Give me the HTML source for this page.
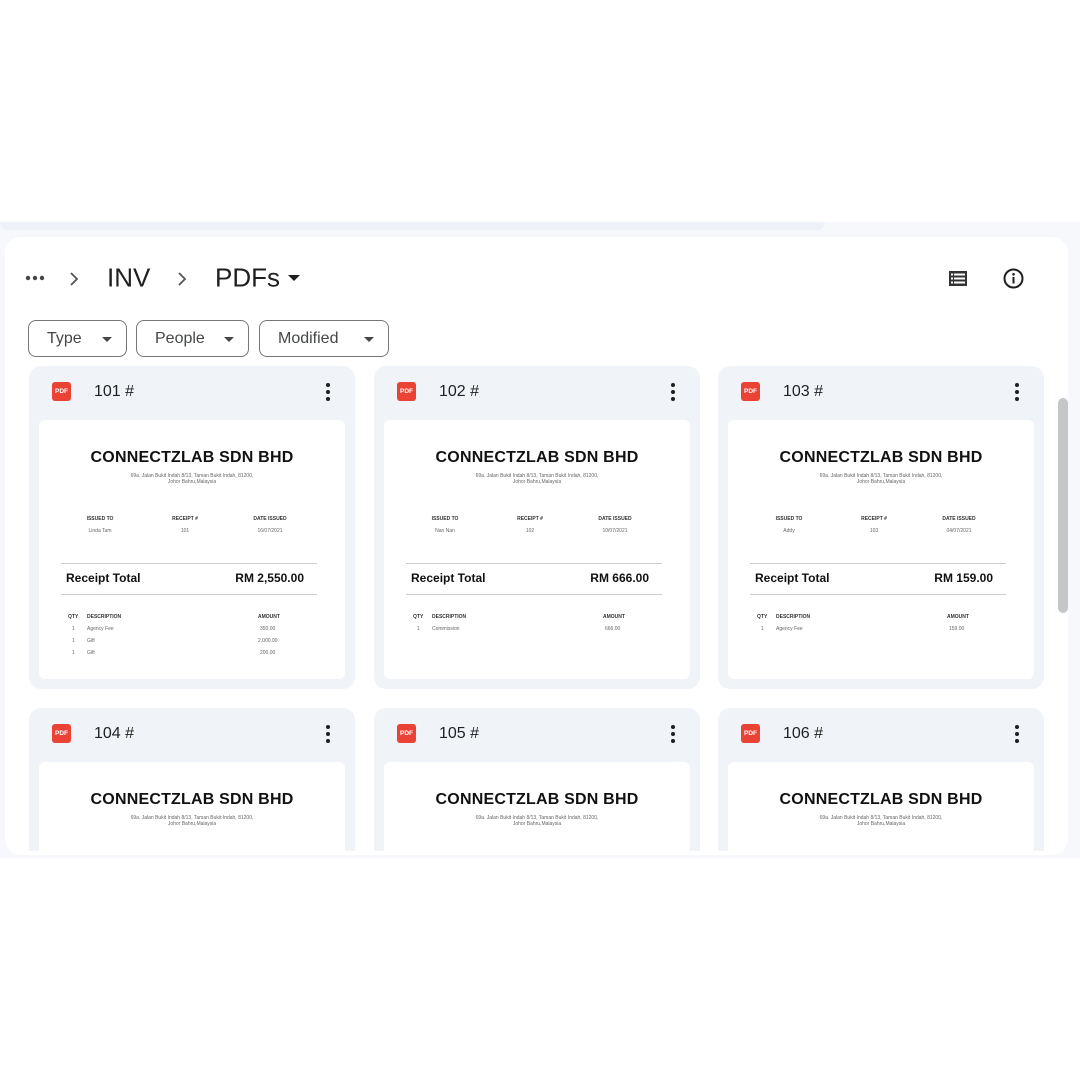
<!DOCTYPE html>
<html><head><style>
*{margin:0;padding:0;box-sizing:border-box}
body{width:1080px;height:1080px;background:#fff;position:relative;overflow:hidden;font-family:"Liberation Sans",Arial,sans-serif;color:#1f1f1f}
.bg{position:absolute;left:0;top:222px;width:1080px;height:636px;background:#f6f8fc}
.topbar{position:absolute;left:0;top:222px;width:825px;height:8px;background:#eef1f8;border-radius:0 0 8px 8px}
.panel{position:absolute;left:5px;top:237px;width:1063px;height:618px;background:#fff;border-radius:16px;overflow:hidden}
.crumb{position:absolute;top:278px;transform:translateY(-50%);font-size:26px;color:#1f1f1f}
.chip{position:absolute;top:320px;height:37px;border:1px solid #747775;border-radius:8px;font-size:16px;color:#444746;line-height:35px;padding-left:18px}
.chip:after{content:"";position:absolute;right:14px;top:16px;border-left:5px solid transparent;border-right:5px solid transparent;border-top:5px solid #444746}
.card{position:absolute;width:326px;background:#f0f4f9;border-radius:12px;overflow:hidden}
.pdf{position:absolute;left:23px;top:16px;width:19px;height:19px;background:#ea4335;border-radius:3px;color:#fff;font-size:6.5px;font-weight:bold;text-align:center;line-height:19px}
.name{position:absolute;left:65px;top:17px;font-size:16px;color:#1f1f1f}
.dots{position:absolute;left:297px;top:17px;width:4px}
.dots i{display:block;width:4px;height:4px;border-radius:2px;background:#1f1f1f;margin-bottom:3px}
.pv{position:absolute;left:10px;top:54px;width:306px;height:259px;background:#fff;border-radius:6px;color:#111}
.pv div{position:absolute;white-space:nowrap}
.t{left:0;width:306px;text-align:center;top:29px;font-size:16px;font-weight:bold;letter-spacing:.2px}
.ad{left:0;width:306px;text-align:center;font-size:5px;color:#666;line-height:6px;top:53px}
.h{font-size:5px;font-weight:bold;color:#333;top:96px;width:80px;text-align:center}
.v{font-size:5px;color:#666;top:108px;width:80px;text-align:center}
.ln{left:22px;width:256px;height:1px;background:#ccc}
.rt{left:27px;top:151px;font-size:12px;font-weight:bold}
.ra{right:41px;top:151px;font-size:12px;font-weight:bold}
.s{font-size:5px;color:#666}
.sb{font-size:5px;font-weight:bold;color:#333}
</style></head><body>
<div class="bg"></div><div class="topbar"></div>
<div class="panel"></div>
<svg style="position:absolute;left:25px;top:273px" width="20" height="10"><circle cx="3" cy="5" r="2.2" fill="#444"/><circle cx="10" cy="5" r="2.2" fill="#444"/><circle cx="17" cy="5" r="2.2" fill="#444"/></svg>
<svg style="position:absolute;left:68px;top:271px" width="12" height="16"><path d="M3 2l6 6-6 6" fill="none" stroke="#555" stroke-width="1.8"/></svg>
<div class="crumb" style="left:107px">INV</div>
<svg style="position:absolute;left:176px;top:271px" width="12" height="16"><path d="M3 2l6 6-6 6" fill="none" stroke="#555" stroke-width="1.8"/></svg>
<div class="crumb" style="left:215px">PDFs</div>
<svg style="position:absolute;left:287px;top:274px" width="14" height="8"><path d="M1 1h12l-6 6z" fill="#1f1f1f"/></svg>
<svg style="position:absolute;left:948px;top:270px" width="20" height="17"><rect x="1" y="1" width="18" height="15" fill="#333"/><g fill="#fff"><rect x="6" y="3.5" width="11" height="2"/><rect x="6" y="7.5" width="11" height="2"/><rect x="6" y="11.5" width="11" height="2"/><rect x="3" y="3.5" width="2" height="2"/><rect x="3" y="7.5" width="2" height="2"/><rect x="3" y="11.5" width="2" height="2"/></g></svg>
<svg style="position:absolute;left:1003px;top:268px" width="21" height="21"><circle cx="10.5" cy="10.5" r="9" fill="none" stroke="#1f1f1f" stroke-width="2"/><rect x="9.5" y="9" width="2" height="6.5" fill="#1f1f1f"/><circle cx="10.5" cy="6.3" r="1.3" fill="#1f1f1f"/></svg>
<div class="chip" style="left:28px;width:99px">Type</div>
<div class="chip" style="left:136px;width:113px">People</div>
<div class="chip" style="left:259px;width:130px">Modified</div>
<div style="position:absolute;left:1058px;top:398px;width:10px;height:215px;background:#c4c7c5;border-radius:5px"></div>

<div class="card" style="left:29px;top:366px;height:323px"><div class="pdf">PDF</div><div class="name">101 #</div><div class="dots"><i></i><i></i><i></i></div>
<div class="pv"><div class="t">CONNECTZLAB SDN BHD</div><div class="ad">69a. Jalan Bukit Indah 8/13, Taman Bukit Indah, 81200,<br>Johor Bahru,Malaysia</div>
<div class="h" style="left:21px">ISSUED TO</div><div class="h" style="left:106px">RECEIPT #</div><div class="h" style="left:191px">DATE ISSUED</div>
<div class="v" style="left:21px">Linda Tam</div><div class="v" style="left:106px">101</div><div class="v" style="left:191px">16/07/2021</div>
<div class="ln" style="top:143px"></div><div class="rt">Receipt Total</div><div class="ra">RM 2,550.00</div><div class="ln" style="top:174px"></div>
<div class="sb" style="left:29px;top:194px">QTY</div><div class="sb" style="left:48px;top:194px">DESCRIPTION</div><div class="sb" style="left:219px;top:194px">AMOUNT</div>
<div class="s" style="left:33px;top:206px">1</div><div class="s" style="left:48px;top:206px">Agency Fee</div><div class="s" style="left:221px;top:206px">350.00</div>
<div class="s" style="left:33px;top:218px">1</div><div class="s" style="left:48px;top:218px">Gift</div><div class="s" style="left:219px;top:218px">2,000.00</div>
<div class="s" style="left:33px;top:230px">1</div><div class="s" style="left:48px;top:230px">Gift</div><div class="s" style="left:221px;top:230px">200.00</div></div></div>

<div class="card" style="left:374px;top:366px;height:323px"><div class="pdf">PDF</div><div class="name">102 #</div><div class="dots"><i></i><i></i><i></i></div>
<div class="pv"><div class="t">CONNECTZLAB SDN BHD</div><div class="ad">69a. Jalan Bukit Indah 8/13, Taman Bukit Indah, 81200,<br>Johor Bahru,Malaysia</div>
<div class="h" style="left:21px">ISSUED TO</div><div class="h" style="left:106px">RECEIPT #</div><div class="h" style="left:191px">DATE ISSUED</div>
<div class="v" style="left:21px">Nan Nan</div><div class="v" style="left:106px">102</div><div class="v" style="left:191px">10/07/2021</div>
<div class="ln" style="top:143px"></div><div class="rt">Receipt Total</div><div class="ra">RM 666.00</div><div class="ln" style="top:174px"></div>
<div class="sb" style="left:29px;top:194px">QTY</div><div class="sb" style="left:48px;top:194px">DESCRIPTION</div><div class="sb" style="left:219px;top:194px">AMOUNT</div>
<div class="s" style="left:33px;top:206px">1</div><div class="s" style="left:48px;top:206px">Commission</div><div class="s" style="left:221px;top:206px">666.00</div></div></div>

<div class="card" style="left:718px;top:366px;height:323px"><div class="pdf">PDF</div><div class="name">103 #</div><div class="dots"><i></i><i></i><i></i></div>
<div class="pv"><div class="t">CONNECTZLAB SDN BHD</div><div class="ad">69a. Jalan Bukit Indah 8/13, Taman Bukit Indah, 81200,<br>Johor Bahru,Malaysia</div>
<div class="h" style="left:21px">ISSUED TO</div><div class="h" style="left:106px">RECEIPT #</div><div class="h" style="left:191px">DATE ISSUED</div>
<div class="v" style="left:21px">Addy</div><div class="v" style="left:106px">103</div><div class="v" style="left:191px">04/07/2021</div>
<div class="ln" style="top:143px"></div><div class="rt">Receipt Total</div><div class="ra">RM 159.00</div><div class="ln" style="top:174px"></div>
<div class="sb" style="left:29px;top:194px">QTY</div><div class="sb" style="left:48px;top:194px">DESCRIPTION</div><div class="sb" style="left:219px;top:194px">AMOUNT</div>
<div class="s" style="left:33px;top:206px">1</div><div class="s" style="left:48px;top:206px">Agency Fee</div><div class="s" style="left:221px;top:206px">159.00</div></div></div>

<div class="card" style="left:29px;top:708px;height:143px;border-radius:12px 12px 0 0"><div class="pdf">PDF</div><div class="name">104 #</div><div class="dots"><i></i><i></i><i></i></div>
<div class="pv"><div class="t">CONNECTZLAB SDN BHD</div><div class="ad">69a. Jalan Bukit Indah 8/13, Taman Bukit Indah, 81200,<br>Johor Bahru,Malaysia</div></div></div>
<div class="card" style="left:374px;top:708px;height:143px;border-radius:12px 12px 0 0"><div class="pdf">PDF</div><div class="name">105 #</div><div class="dots"><i></i><i></i><i></i></div>
<div class="pv"><div class="t">CONNECTZLAB SDN BHD</div><div class="ad">69a. Jalan Bukit Indah 8/13, Taman Bukit Indah, 81200,<br>Johor Bahru,Malaysia</div></div></div>
<div class="card" style="left:718px;top:708px;height:143px;border-radius:12px 12px 0 0"><div class="pdf">PDF</div><div class="name">106 #</div><div class="dots"><i></i><i></i><i></i></div>
<div class="pv"><div class="t">CONNECTZLAB SDN BHD</div><div class="ad">69a. Jalan Bukit Indah 8/13, Taman Bukit Indah, 81200,<br>Johor Bahru,Malaysia</div></div></div>
</body></html>
